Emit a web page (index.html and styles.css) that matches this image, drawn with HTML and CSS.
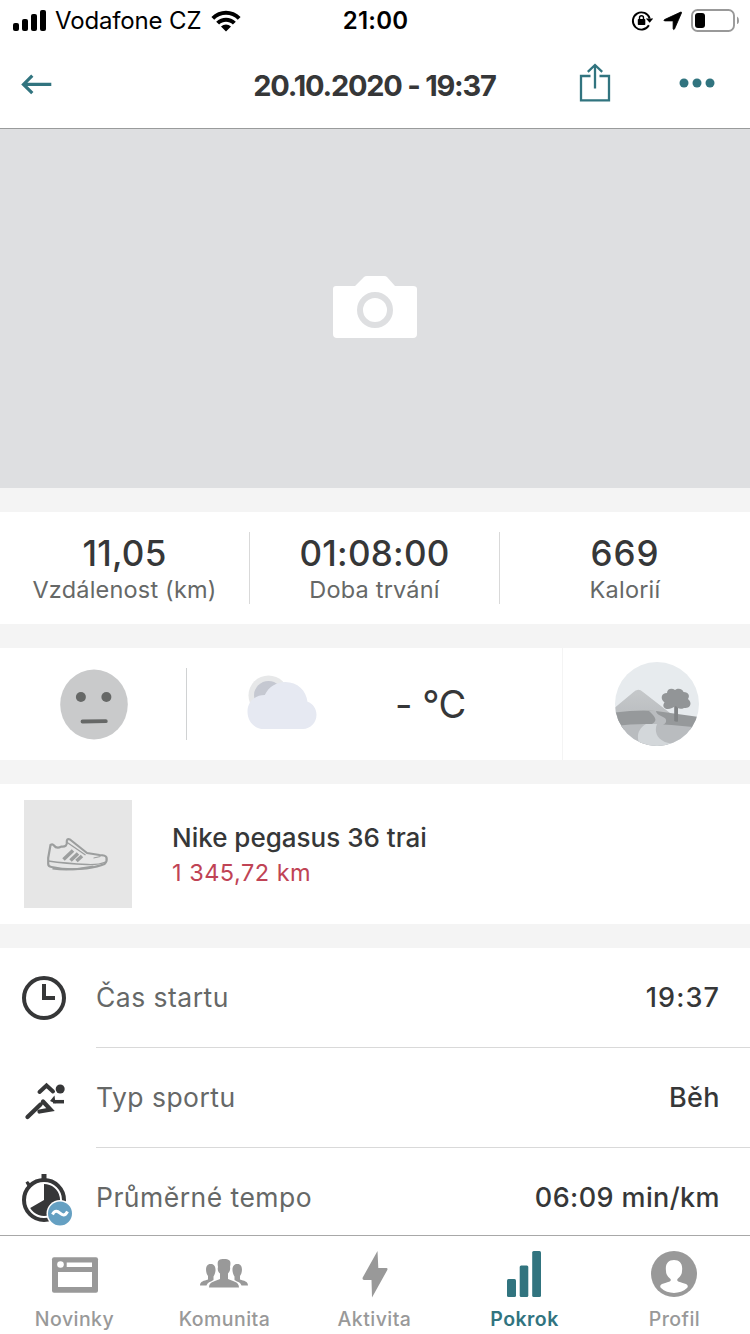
FILE: index.html
```html
<!DOCTYPE html>
<html lang="cs">
<head>
<meta charset="utf-8">
<title>20.10.2020 - 19:37</title>
<link rel="stylesheet" href="styles.css">
</head>
<body>
<div class="screen">
  <header class="header">
    <div class="status">
      <div class="status-left">
        <svg class="signal" width="34" height="22" viewBox="0 0 34 22"><rect x="0" y="13" width="6" height="8" rx="2"/><rect x="9" y="9" width="6" height="12" rx="2"/><rect x="18" y="4" width="6" height="17" rx="2"/><rect x="27" y="0" width="6" height="21" rx="2"/></svg>
        <span class="carrier">Vodafone CZ</span>
        <svg class="wifi" width="30" height="22" viewBox="0 0 30 22"><path d="M.4 6.900C8.500-1.300 21.500-1.300 29.600 6.900L26.800 9.700C20.300 3.100 9.700 3.100 3.200 9.700ZM5.200 11.700C10.700 6.300 19.300 6.300 24.800 11.700L21.900 14.600C18.100 10.900 11.900 10.900 8.100 14.600ZM10 16.600C12.900 13.900 17.100 13.900 20 16.600L15 21.600Z"/></svg>
      </div>
      <span class="clock">21:00</span>
      <div class="status-right">
        <svg width="22" height="22" viewBox="631 10 22 22"><path d="M648.900 25.300A8.600 8.600 0 1 1 649.700 18.500" fill="none" stroke="#000" stroke-width="1.900"/><path d="M645.800 18.500H653.200L649.700 22.800Z"/><rect x="637.800" y="19" width="7.500" height="6" rx=".8"/><path d="M639.500 19.500V17.800a2 2 0 0 1 4 0V19.500" fill="none" stroke="#000" stroke-width="1.400"/></svg>
        <svg width="20" height="20" viewBox="662.500 11 20 20"><path d="M681.200 12.100Q682.300 11.800 682 12.900L675 29Q674.200 30.200 673.600 29V21.400Q673.600 20.900 673.100 20.900H665Q663.800 20.300 665 19.600Z" stroke="#000" stroke-width=".8"/></svg>
        <svg width="49" height="24" viewBox="691 8 49 24"><rect x="692" y="9" width="42" height="21" rx="5.500" fill="none" stroke="#999" stroke-width="1.900"/><rect x="695" y="12" width="10" height="15" rx="3"/><path d="M737 15.500Q739 16.300 739 19.500T737 23Z" fill="#999"/></svg>
      </div>
    </div>
    <nav class="nav">
      <svg class="back" width="32" height="22" viewBox="20 73 32 22"><path d="M32.300 75.700L23.500 84.400L32.300 93.100M23.500 84.400H51.300" fill="none" stroke="#31747f" stroke-width="3.200"/></svg>
      <h1 class="title">20.10.2020 - 19:37</h1>
      <svg class="share" width="32" height="40" viewBox="579 62 32 40"><path d="M590.500 76H581V100.300H609V76H599.500M595 88.500V65.500M587.800 71.800L595 65L602.200 71.800" fill="none" stroke="#31747f" stroke-width="2.300"/></svg>
      <svg class="more" width="38" height="12" viewBox="678 77 38 12" fill="#31747f"><circle cx="684" cy="83" r="4.500"/><circle cx="697" cy="83" r="4.500"/><circle cx="710" cy="83" r="4.500"/></svg>
    </nav>
  </header>

  <section class="hero">
    <svg width="84" height="62" viewBox="333 276 84 62"><path d="M336 286H355L364 277Q365 276 367 276H384Q386 276 387 277L395 286H413Q417 286 417 289V334Q417 338 413 338H337Q333 338 333 334V289Q333 286 336 286Z" fill="#fff"/><circle cx="375" cy="310" r="15" fill="none" stroke="#dedfe1" stroke-width="6"/></svg>
  </section>

  <section class="stats">
    <div class="stat"><strong>11,05</strong><span>Vzdálenost (km)</span></div>
    <div class="stat"><strong>01:08:00</strong><span>Doba trvání</span></div>
    <div class="stat"><strong class="calories">669</strong><span>Kalorií</span></div>
  </section>

  <section class="conditions">
    <div class="mood">
      <svg width="68" height="71" viewBox="60 668.500 68 71"><ellipse cx="94" cy="704" rx="33.800" ry="35" fill="#c9cacb"/><circle cx="80.900" cy="696.500" r="5" fill="#666867"/><circle cx="106.400" cy="696.500" r="5" fill="#666867"/><path d="M82.500 721L105.800 720.700" stroke="#666867" stroke-width="3.800" stroke-linecap="round"/></svg>
    </div>
    <div class="weather">
      <svg width="70" height="56" viewBox="247 674 70 56"><circle cx="268.500" cy="695.500" r="20" fill="#e7e8e9"/><circle cx="268.500" cy="695.500" r="14.500" fill="#c5c8d1"/><path d="M264 729C254.500 729 247.500 721.500 247.500 711.500C247.500 701.800 254.800 695 264.800 695C268.500 687 276.500 682 285.300 682C297.500 682 306.300 690.500 307.500 701.800C313 703.600 316.500 708.800 316.500 714.800C316.500 722.800 310.500 729 303 729Z" fill="#e6e9f2"/></svg>
      <span class="temp">- °C</span>
    </div>
    <div class="terrain">
      <svg width="84" height="84" viewBox="615 662 84 84"><defs><clipPath id="disc"><circle cx="657" cy="704" r="42"/></clipPath><linearGradient id="hill" x1="0" y1="0" x2="0" y2="1"><stop offset="0" stop-color="#c5c8ca"/><stop offset="1" stop-color="#b8bbbe"/></linearGradient></defs><g clip-path="url(#disc)"><path d="M615 662H699V746H615Z" fill="#e7ebee"/><path d="M615 707.500L633 692.500Q638 687.500 643 692L670 713V724H615Z" fill="url(#hill)"/><path d="M615 712.500Q638 709.500 656 711L699 717V730H615Z" fill="#96999b"/><path d="M615 726Q650 721 699 728V746H615Z" fill="#b9bcbf"/><path d="M649 711H656C657 717 668 716 666 722C664 726 656 727 656 733C656 739 662 743 672 746H642C636 740 636 731 643 724H652C659 720 654 716 649 711Z" fill="#b9bcbf"/><path d="M646 724H657C654 731 656 742 673 744L660 748H642C636 740 636 730 646 724Z" fill="#d3d7da"/><path d="M674.200 704H678V721.500Q676 722 674.200 721Z" fill="#808385"/><path d="M672 708C666 711 661 707 664.500 702.500C660 699 661 693 667 693C667 688.500 672 687.500 675 690C678 687.500 683 689 683.500 692C689 692 690 696 688 699C693 703 690 709 684 708C680 710 677 708 676 706Z" fill="#929597"/></g></svg>
    </div>
  </section>

  <section class="gear">
    <div class="thumb">
      <svg width="64" height="36" viewBox="46.500 836 64 36" fill="none" stroke="#9c9e9e" stroke-width="2.200" stroke-linejoin="round"><path d="M51 845L48.700 858V864Q48.700 866.500 52 867Q68 870.500 87 868.500Q99 866.500 105 864Q108 861 107 857.500Q106 855 100 855L87.500 853L70.500 839.500Q67 838 67.300 842Q68 847 62 846.500Q57 849 54.500 845.500Q53 843.500 51 845Z"/><path d="M48.700 861Q66 863.500 88 864.500Q99 865 106 862M67 842L86 855" stroke-width="1.300"/><path d="M53 868.500Q72 871 94 866.500" stroke-width="2"/><path d="M64 859.500L73.500 850.500M71 860.500L78.500 853.500M77 861L82.500 856" stroke-width="3.600"/><path d="M94 858L101 856.500" stroke-width="1"/></svg>
    </div>
    <div class="gear-text"><span class="gear-name">Nike pegasus 36 trai</span><span class="gear-km">1 345,72 km</span></div>
  </section>

  <section class="details">
    <div class="row">
      <svg width="52" height="52" viewBox="20 972 52 52" fill="none" stroke="#363738"><circle cx="44" cy="998" r="20" stroke-width="4"/><path d="M44 984V998H55" stroke-width="4"/></svg>
      <div class="row-body"><span>Čas startu</span><b class="start-time">19:37</b></div>
    </div>
    <div class="row">
      <svg width="52" height="52" viewBox="20 1072 52 52" fill="none" stroke="#363738" stroke-width="4"><circle cx="60.200" cy="1089" r="4.500" fill="#363738" stroke="none"/><path d="M39.500 1092L46.500 1085.500L53 1091.500" stroke-linecap="round"/><path d="M27.500 1117L40.500 1104.500M43 1101.500L50.500 1109.500L39.500 1111.500" stroke-linecap="round" stroke-width="4.300"/><path d="M53 1101.700H64" stroke-width="3.500"/><path d="M50 1101L54.500 1095.500L55.500 1103.500Z" fill="#363738" stroke="none"/></svg>
      <div class="row-body"><span>Typ sportu</span><b>Běh</b></div>
    </div>
    <div class="row">
      <svg width="53" height="54" viewBox="20 1172 53 54"><circle cx="44" cy="1200" r="20" fill="none" stroke="#363738" stroke-width="4"/><path d="M41.500 1174H46.500V1180H41.500ZM25.500 1182.500L28 1181L31 1184.500L28 1187Z" fill="#363738"/><path d="M44 1200V1184A16 16 0 1 1 30.200 1208Z" fill="#363738"/><circle cx="60" cy="1213.500" r="13.500" fill="#fff"/><circle cx="60" cy="1213.500" r="12" fill="#65a0c2"/><path d="M52.500 1214.500C55 1209.500 58 1211.500 60 1213.200C62 1215 65 1216.500 67.500 1211.500" fill="none" stroke="#fff" stroke-width="3"/></svg>
      <div class="row-body"><span>Průměrné tempo</span><b>06:09 min/km</b></div>
    </div>
  </section>

  <footer class="tabs">
    <div class="tab">
      <svg width="50" height="48" viewBox="50 1250 50 48"><rect x="52" y="1257.300" width="46" height="35.500" rx="2" fill="#999"/><circle cx="60.500" cy="1264.500" r="3.300" fill="#fff"/><path d="M66.700 1262.500H92V1267H66.700ZM58 1272H92V1287H58Z" fill="#fff"/></svg>
      <span>Novinky</span>
    </div>
    <div class="tab">
      <svg width="50" height="48" viewBox="200 1250 50 48" fill="#999"><path id="friend" d="M200 1285.500C200 1281 204 1281 208 1279.500V1276C205.500 1273 204.500 1264 210.500 1264C216 1263.500 217 1271 213.500 1276.500V1280L211 1281.500C208 1282.500 207 1284 206.500 1285.500Z"/><use href="#friend" transform="translate(448 0) scale(-1 1)"/><path d="M209 1287.500C209 1281.500 215 1281.500 220 1279V1273.500C217.500 1271.500 217.500 1269 218 1267C217 1261 218 1259 224 1259C231 1259 231 1262 230 1267C230.500 1269 230 1271.500 228 1273.500V1279C233 1281.500 239 1281.500 239 1287.500Z"/></svg>
      <span>Komunita</span>
    </div>
    <div class="tab">
      <svg width="50" height="48" viewBox="350 1250 50 48"><path d="M377.500 1251L378.300 1268H386.500Q388 1268.300 387.300 1270L372 1297.500L371.500 1280H364Q362 1279.800 362.700 1277.500Z" fill="#999"/></svg>
      <span>Aktivita</span>
    </div>
    <div class="tab active">
      <svg width="50" height="48" viewBox="500 1250 50 48" fill="#31747f"><rect x="507" y="1279" width="9" height="18" rx="1.500"/><rect x="519.700" y="1265.500" width="8.600" height="31.500" rx="1.500"/><rect x="532.200" y="1251" width="8.800" height="46" rx="1.500"/></svg>
      <span>Pokrok</span>
    </div>
    <div class="tab">
      <svg width="50" height="48" viewBox="650 1250 50 48"><circle cx="674" cy="1274" r="23" fill="#999"/><path d="M674 1260C680 1260 683 1264 682 1271C682 1275 679.500 1277 677.500 1279C676 1282 681 1282 686 1284Q689 1285.500 687 1288C680 1294.500 668 1294.500 661 1288Q659 1285.500 662 1284C667 1282 672 1282 670.500 1279C668.500 1277 666 1275 666 1271C665 1264 668 1260 674 1260Z" fill="#fff"/></svg>
      <span>Profil</span>
    </div>
  </footer>
</div>
</body>
</html>
```
FILE: styles.css
```css
* { box-sizing: border-box; }
body { margin: 0; font-family: Inter, "Liberation Sans", sans-serif; color: #363738; }
svg { display: block; flex: none; }
span, strong, b, h1 { white-space: nowrap; }

.screen { width: 750px; height: 1334px; display: flex; flex-direction: column; background: #f4f4f4; overflow: hidden; }

.header { flex: none; height: 129px; background: #fff; border-bottom: 1px solid #999b9b; }
.status { display: grid; grid-template-columns: 1fr auto 1fr; height: 41px; line-height: 41px; padding: 0 10px 0 13px; color: #000; font-size: 24px; align-items: center; }
.status-left, .status-right { display: flex; align-items: center; }
.status-left { gap: 8px; }
.carrier { letter-spacing: -0.15px; }
.wifi { margin-left: 2px; }
.clock { font-weight: 600; letter-spacing: 0.2px; margin-right: 2px; }
.status-right { justify-content: flex-end; gap: 9px; }

.nav { display: grid; grid-template-columns: 233px 243px 103px 1fr; height: 87px; padding-left: 20px; }
.back { margin-top: 32px; }
.title { margin: 27px 0 0; font-size: 29px; line-height: 35px; font-weight: 700; letter-spacing: -1.23px; text-align: center; }
.share { margin: 21px 0 0 83px; }
.more { margin: 36px 0 0 79px; }

.hero { flex: none; height: 359px; display: flex; justify-content: center; padding-top: 147px; background: #dedfe1; }

.stats { flex: none; display: flex; height: 112px; margin-top: 24px; padding: 20px 0; background: #fff; }
.stat { width: 250px; display: flex; flex-direction: column; align-items: center; border-right: 1px solid #d9d9d9; }
.stat:last-child { border-right: 0; }
.stat strong { font-size: 35px; line-height: 42px; font-weight: 500; letter-spacing: 0.25px; }
.stat .calories { letter-spacing: 0.9px; }
.stat span { font-size: 23.5px; line-height: 32px; color: #666867; letter-spacing: 0.2px; }

.conditions { flex: none; display: flex; height: 112px; margin-top: 24px; background: #fff; }
.mood { width: 187px; height: 72px; margin-top: 20px; padding-left: 2px; display: flex; align-items: center; justify-content: center; border-right: 1px solid #d0d2d3; }
.weather { width: 376px; display: flex; align-items: center; border-right: 1px solid #f4f4f4; padding: 0 0 4px 60px; }
.temp { margin: 3px 0 0 78px; font-size: 38px; letter-spacing: -0.5px; }
.terrain { flex: 1; display: flex; align-items: center; justify-content: center; }

.gear { flex: none; display: flex; height: 140px; margin-top: 24px; padding: 16px 24px; gap: 40px; background: #fff; }
.thumb { width: 108px; height: 108px; display: flex; align-items: center; justify-content: center; background: #e6e6e6; }
.gear-text { display: flex; flex-direction: column; padding-top: 20px; }
.gear-name { font-size: 26px; line-height: 36px; font-weight: 500; }
.gear-km { font-size: 23.5px; line-height: 34px; color: #c04355; letter-spacing: 0.5px; }

.details { flex: 1; min-height: 0; overflow: hidden; margin-top: 24px; background: #fff; }
.row { display: flex; height: 100px; padding-left: 20px; gap: 24px; }
.row svg { margin-top: 24px; }
.row:last-child .row-body { margin-left: -1px; }
.row-body { flex: 1; display: flex; justify-content: space-between; height: 100px; padding-right: 30px; border-bottom: 1px solid #d9d9d9; font-size: 26.5px; line-height: 99px; }
.row-body span { color: #666867; letter-spacing: 0.48px; }
.row-body b { font-size: 27px; font-weight: 500; letter-spacing: 0.4px; }
.row-body .start-time { letter-spacing: 1.1px; }

.tabs { flex: none; display: flex; height: 99px; border-top: 1px solid #a8a8a8; background: #fff; }
.tab { flex: 1; display: flex; flex-direction: column; align-items: center; padding-top: 14px; font-size: 19.5px; line-height: 28px; font-weight: 500; color: #999; letter-spacing: 0.45px; }
.tab svg { margin-bottom: 7px; }
.tab span { padding-right: 1px; }
.active { color: #31747f; font-weight: 600; }
```
